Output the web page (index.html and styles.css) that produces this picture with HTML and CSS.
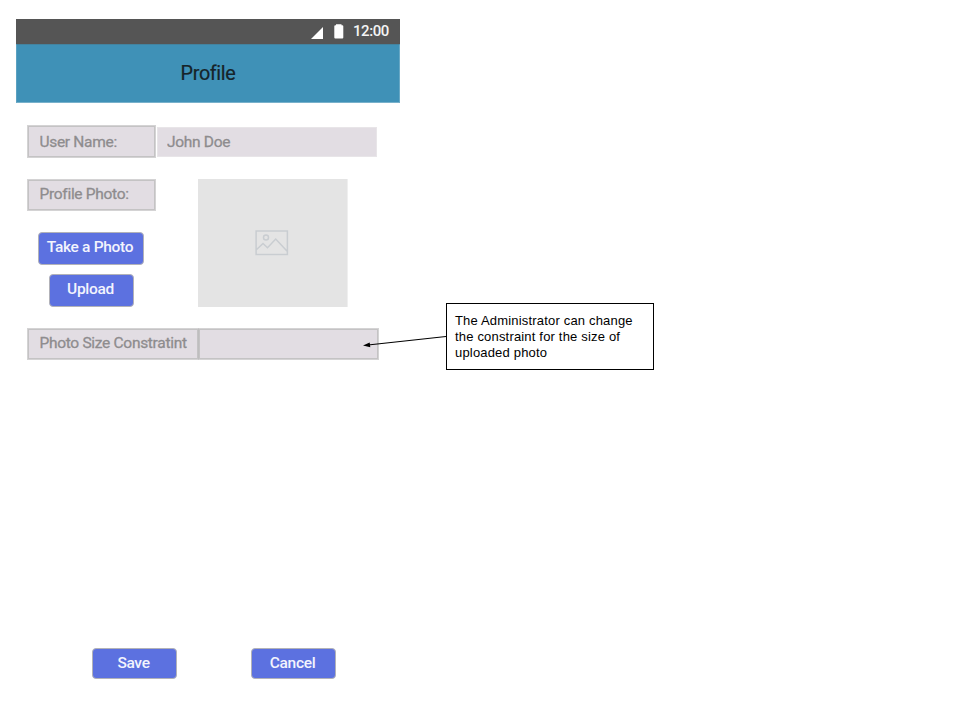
FILE: index.html
```html
<!DOCTYPE html>
<html lang="en">
<head>
<meta charset="utf-8">
<title>Profile</title>
<link rel="stylesheet" href="styles.css">
</head>
<body>
<main class="canvas">
  <section class="phone">
    <div class="status-bar">
      <svg class="signal" width="12" height="12" viewBox="0 0 12 12"><path d="M0 12 12 0V12Z"/></svg>
      <svg class="battery" width="10" height="15" viewBox="0 0 10 15"><path d="M2 1.200V.3H7.500V1.200H8.300Q9.300 1.200 9.300 2.200V13.500Q9.300 14.500 8.300 14.500H1.300Q.3 14.500.3 13.500V2.200Q.3 1.200 1.300 1.200Z"/></svg>
      <span class="clock">12:00</span>
    </div>
    <header class="app-bar"><h1>Profile</h1></header>
    <form class="form">
      <div class="row name-row">
        <label class="field name-label"><span>User Name:</span></label>
        <div class="field name-value"><span>John Doe</span></div>
      </div>
      <div class="row photo-row">
        <div class="photo-controls">
          <label class="field photo-label"><span>Profile Photo:</span></label>
          <button type="button" class="btn take">Take a Photo</button>
          <button type="button" class="btn upload">Upload</button>
        </div>
        <div class="photo">
          <svg width="34" height="26" viewBox="0 0 34 26"><path d="M1.100 1.100H32.400V24.600H1.100ZM1.100 20 8 13.500 12.500 17.800 20.700 9 32.400 21.500"/><circle cx="11" cy="7.600" r="2.500"/></svg>
        </div>
      </div>
      <div class="row size-row">
        <label class="field size-label"><span>Photo Size Constratint</span></label>
        <div class="field size-value"></div>
      </div>
      <footer class="actions">
        <button type="button" class="btn">Save</button>
        <button type="button" class="btn">Cancel</button>
      </footer>
    </form>
  </section>
  <aside class="note">The Administrator can change<br>the constraint for the size of<br>uploaded photo
    <svg class="arrow" width="84" height="14" viewBox="0 0 84 14"><path class="line" d="M83 2.500 5 11"/><path d="M0 11.600 6.700 8.600 7.300 13.200Z"/></svg>
  </aside>
</main>
</body>
</html>
```

FILE: styles.css
```css
* { box-sizing: border-box; }
body { margin: 0; background: #fff; font-family: Roboto, sans-serif; }
.canvas { display: flex; align-items: flex-start; width: 960px; height: 720px; padding: 19px 0 0 16px; overflow: hidden; }
.phone { width: 384px; height: 680px; }
.status-bar { display: flex; justify-content: flex-end; height: 25px; padding-right: 11px; background: #555; color: #f4f4f4; }
.status-bar svg { fill: #fff; }
.signal { margin: 8px 11px 0 0; }
.battery { margin: 5px 9px 0 0; }
.clock { font-size: 15px; font-weight: 500; line-height: 24px; letter-spacing: -.4px; }
.app-bar { height: 59px; background: #3f91b7; border: 1px solid #5ba1c1; border-top-color: #43839f; border-right-color: #68a8c5; border-bottom-color: #78b1cb; }
.app-bar h1 { margin: 0; font-size: 19.800px; font-weight: 400; line-height: 57px; letter-spacing: -.35px; text-align: center; color: #162329; -webkit-text-stroke: .2px #162329; }
.form { padding: 22px 0 0 11px; }
.row { display: flex; align-items: flex-start; }
.field { display: block; height: 32px; padding: 0 11.500px; background: #e2dde3; border: 1px solid #d4d3d4; box-shadow: inset 0 0 0 1px #c4c3c4; font-size: 15.500px; line-height: 29px; letter-spacing: -.3px; color: #8e8c8e; white-space: nowrap; -webkit-text-stroke: .3px #8e8c8e; }
.field span { display: block; overflow: hidden; }
.name-row { align-items: center; gap: 1px; height: 33px; }
.name-label { width: 129px; height: 33px; line-height: 32px; }
.name-value { width: 220px; height: 30px; border: 1px solid #e8e5e8; box-shadow: none; padding: 0 9px; line-height: 28px; }
.photo-row { margin-top: 21px; gap: 42px; }
.photo-controls { display: flex; flex-direction: column; width: 129px; }
.photo-label { width: 129px; }
.btn { width: 86px; height: 32px; padding: 0 2px 3px 0; border: 1px solid #b2b2b8; border-radius: 4px; background: #5c71e0; font: 500 15.500px/27px Roboto, sans-serif; letter-spacing: -.32px; color: #f3f4fd; text-align: center; white-space: nowrap; }
.take { width: 106px; height: 33px; margin: 21px 0 0 11px; }
.upload { width: 85px; height: 33px; margin: 9px 0 0 22px; }
.photo { display: flex; align-items: center; justify-content: center; width: 150px; height: 128px; padding-right: 1px; background: #e4e4e4; border-right: 1px solid #efefef; }
.photo svg { fill: none; stroke: #c9cdd1; stroke-width: 1.500; }
.size-row { margin-top: 21px; }
.size-label { width: 172px; padding-right: 9px; border-right-color: #bebdbe; }
.size-value { width: 181px; margin-left: -1px; border-left-color: #bebdbe; }
.actions { display: flex; gap: 74px; margin: 288px 0 0 65px; }
.actions .btn { width: 85px; height: 31px; padding-bottom: 0; }
.note { position: relative; width: 208px; height: 67px; margin: 284px 0 0 46px; padding: 9px 8px; border: 1px solid #000; font: 13px/16px "Liberation Sans", Arial, sans-serif; letter-spacing: .18px; color: #000; white-space: nowrap; }
.arrow { position: absolute; left: -84px; top: 30px; }
.line { stroke: #000; stroke-width: 1.200; }
```
